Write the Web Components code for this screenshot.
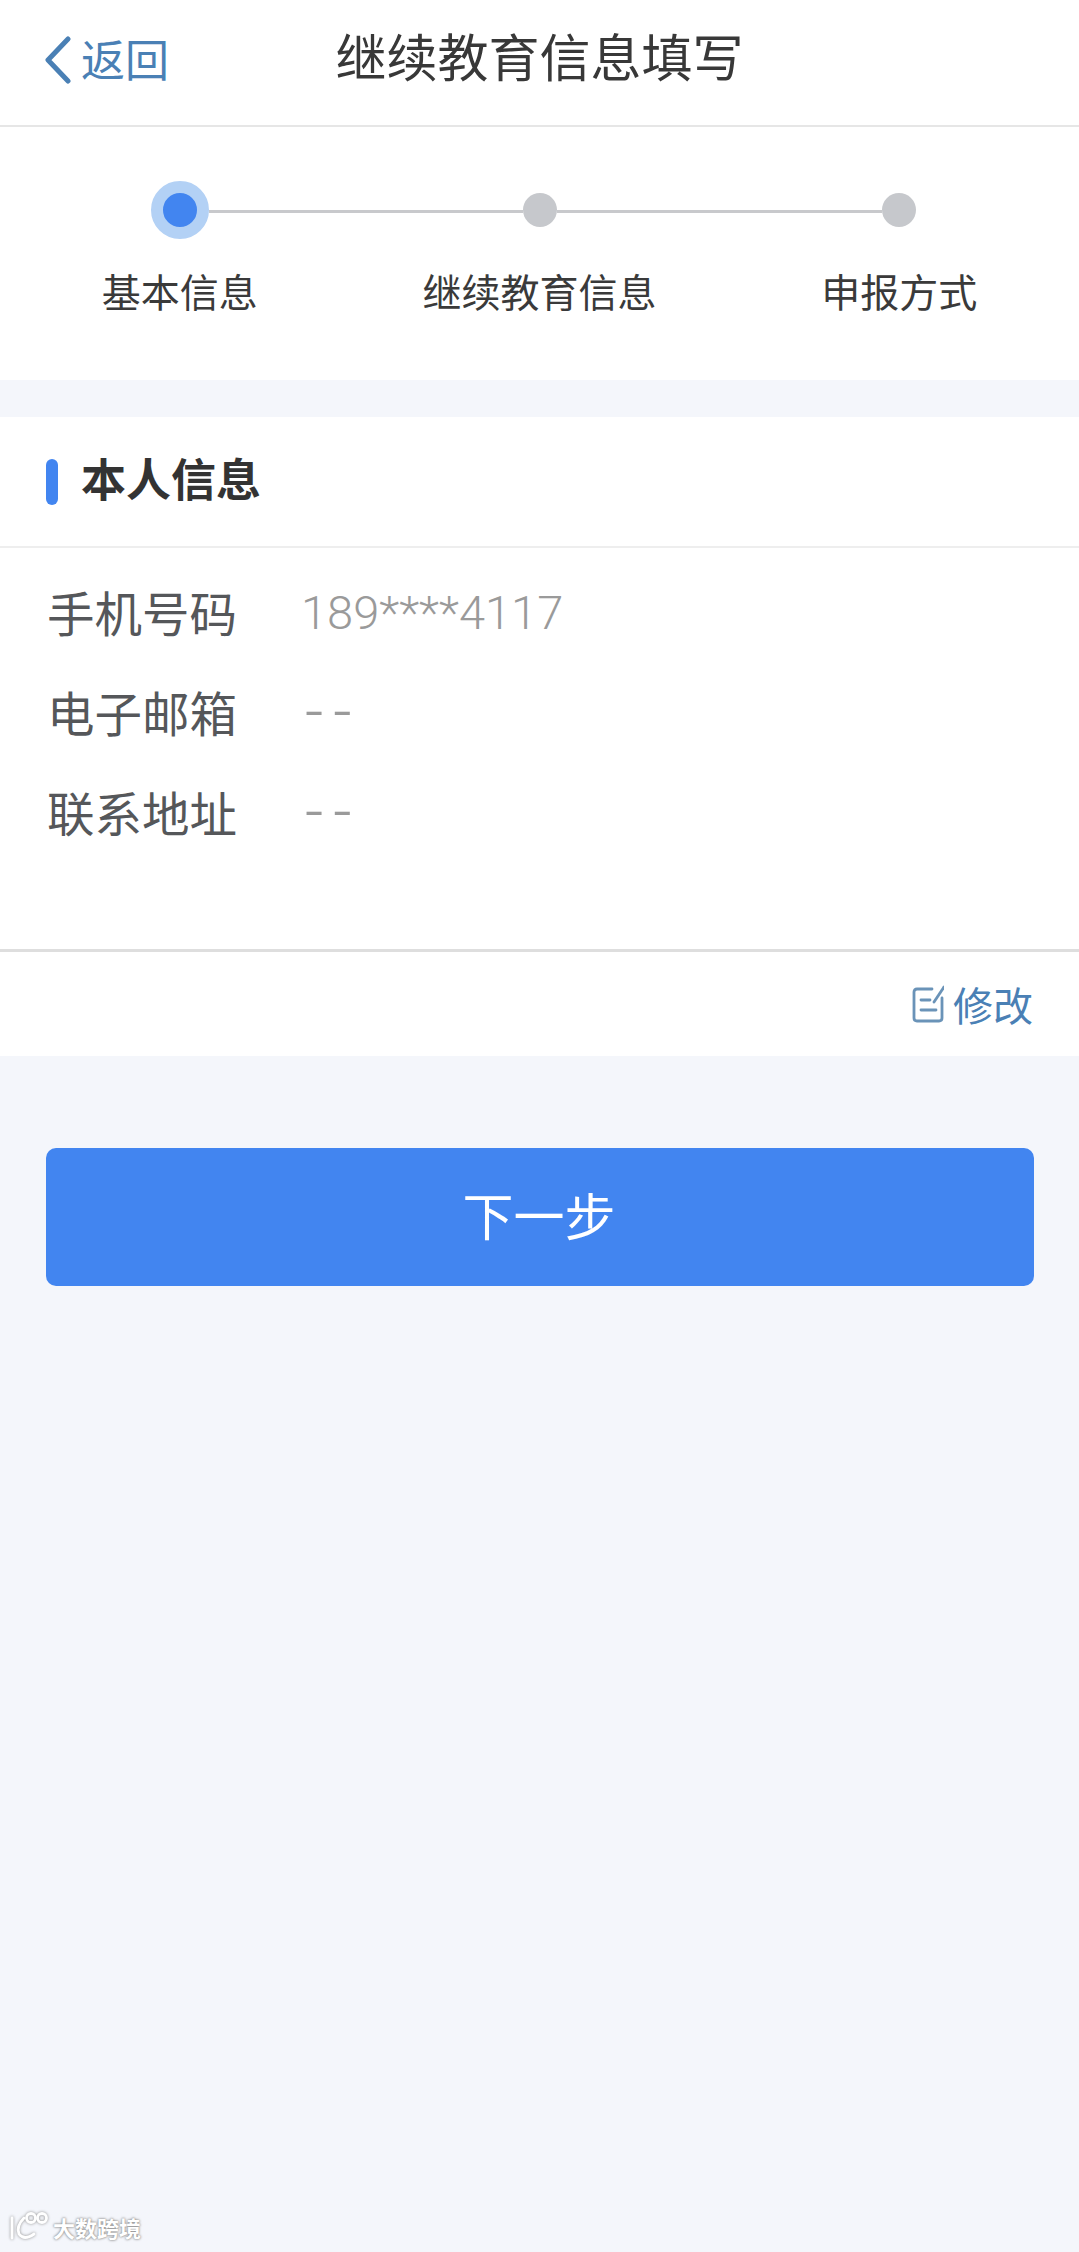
<!DOCTYPE html>
<html lang="zh">
<head>
<meta charset="utf-8">
<title>继续教育信息填写</title>
<style>
  html, body { margin: 0; padding: 0; }
  body {
    background: #f4f6fb;
    font-family: "Noto Sans CJK SC", "Noto Sans", sans-serif;
    color: #333;
  }
</style>
</head>
<body>
<form-page>
  <app-header back="返回">继续教育信息填写</app-header>
  <step-bar>
    <step-item active>基本信息</step-item>
    <step-item>继续教育信息</step-item>
    <step-item>申报方式</step-item>
  </step-bar>
  <info-card heading="本人信息" action="修改">
    <info-row label="手机号码">189****4117</info-row>
    <info-row label="电子邮箱">--</info-row>
    <info-row label="联系地址">--</info-row>
  </info-card>
  <primary-button>下一步</primary-button>
  <brand-mark>大数跨境</brand-mark>
</form-page>

<script>
class FormPage extends HTMLElement {
    constructor() {
        super();
        this.attachShadow({ mode: 'open' });
        this.shadowRoot.innerHTML = `
      <style>
        :host { display: block; position: relative; height: 2252px; overflow: hidden; }
      </style>
      <slot></slot>
    `;
    }
}

class AppHeader extends HTMLElement {
    constructor() {
        super();
        this.attachShadow({ mode: 'open' });
        this.shadowRoot.innerHTML = `
      <style>
        :host {
          display: grid;
          grid-template-columns: 1fr auto 1fr;
          align-items: center;
          height: 125px;
          background: #fff;
          border-bottom: 2px solid #e6e6e6;
        }
        .back {
          display: flex;
          align-items: center;
          gap: 9px;
          padding-left: 44px;
          padding-bottom: 8px;
          color: #4a80b5;
          font-size: 44px;
          line-height: 60px;
        }
        .back span { margin-bottom: 2px; }
        svg { width: 28px; height: 48px; margin-top: 2px; }
        .title { font-size: 51px; line-height: 70px; color: #383838; margin-bottom: 16px; }
      </style>
      <div class="back">
        <svg viewBox="0 0 28 48" fill="none" stroke="#4a80b5" stroke-width="5" stroke-linecap="round" stroke-linejoin="round">
          <path d="M24 3 L4 24 L24 45"/>
        </svg>
        <span id="back"></span>
      </div>
      <div class="title"><slot></slot></div>
      <div></div>
    `;
    }

    connectedCallback() {
        this.shadowRoot.querySelector('#back').textContent = this.getAttribute('back');
    }
}

class StepBar extends HTMLElement {
    constructor() {
        super();
        this.attachShadow({ mode: 'open' });
        this.shadowRoot.innerHTML = `
      <style>
        :host {
          display: grid;
          grid-template-columns: repeat(3, 1fr);
          padding: 54px 0 60px;
          background: #fff;
          margin-bottom: 37px;
        }
        ::slotted(step-item:first-child) { --left-line: transparent; }
        ::slotted(step-item:last-child) { --right-line: transparent; }
      </style>
      <slot></slot>
    `;
    }
}

class StepItem extends HTMLElement {
    constructor() {
        super();
        this.attachShadow({ mode: 'open' });
        this.shadowRoot.innerHTML = `
      <style>
        :host { display: block; }
        .track { display: flex; align-items: center; height: 58px; }
        .line { flex: 1; height: 3px; margin-top: 2px; }
        .left { background: var(--left-line, #c8c9cc); }
        .right { background: var(--right-line, #c8c9cc); }
        .dot { width: 34px; height: 34px; border-radius: 50%; background: #c6c8cc; }
        :host([active]) .dot {
          background: #4285f0;
          border: 12px solid #b3d1f5;
        }
        .label {
          margin-top: 24px;
          margin-bottom: 3px;
          text-align: center;
          font-size: 39px;
          line-height: 54px;
          color: #3a3a3a;
        }
      </style>
      <div class="track">
        <div class="line left"></div>
        <div class="dot"></div>
        <div class="line right"></div>
      </div>
      <div class="label"><slot></slot></div>
    `;
    }
}

class InfoCard extends HTMLElement {
    constructor() {
        super();
        this.attachShadow({ mode: 'open' });
        this.shadowRoot.innerHTML = `
      <style>
        :host { display: block; background: #fff; }
        .head {
          display: flex;
          align-items: center;
          gap: 23px;
          height: 129px;
          padding-left: 46px;
          border-bottom: 2px solid #eeeeee;
        }
        .bar { width: 12px; height: 46px; border-radius: 6px; background: #4285f0; }
        .heading { font-size: 45px; font-weight: 700; color: #333; line-height: 60px; margin-bottom: 7px; }
        .rows { padding: 15px 0 86px; border-bottom: 3px solid #dedede; }
        .foot {
          display: flex;
          justify-content: flex-end;
          align-items: center;
          gap: 9px;
          height: 104px;
          padding-right: 46px;
          color: #4a80b5;
          font-size: 40px;
        }
        svg { width: 32px; height: 38px; }
      </style>
      <div class="head">
        <div class="bar"></div>
        <div class="heading" id="heading"></div>
      </div>
      <div class="rows"><slot></slot></div>
      <div class="foot">
        <svg viewBox="0 0 32 38" fill="none" stroke="#6a93b8" stroke-width="2.8" stroke-linecap="round" stroke-linejoin="round">
          <path d="M20 4 H5 Q2 4 2 7 V33 Q2 36 5 36 H27 Q30 36 30 33 V13"/>
          <path d="M9 15 H18"/>
          <path d="M9 25 H24"/>
          <path d="M22 17 L32 2"/>
        </svg>
        <span id="action"></span>
      </div>
    `;
    }

    connectedCallback() {
        this.shadowRoot.querySelector('#heading').textContent = this.getAttribute('heading');
        this.shadowRoot.querySelector('#action').textContent = this.getAttribute('action');
    }
}

class InfoRow extends HTMLElement {
    constructor() {
        super();
        this.attachShadow({ mode: 'open' });
        this.shadowRoot.innerHTML = `
      <style>
        :host {
          display: flex;
          align-items: center;
          height: 100px;
          padding-left: 47px;
        }
        .label { width: 254px; font-size: 47.5px; color: #55575a; line-height: 64px; margin-bottom: 3px; white-space: nowrap; }
        .value {
          font-family: Roboto, "Noto Sans", sans-serif;
          font-weight: 300;
          font-size: 47px;
          color: #9a9a9a;
          line-height: 64px;
        }
      </style>
      <div class="label" id="label"></div>
      <div class="value"><slot></slot></div>
    `;
    }

    connectedCallback() {
        this.shadowRoot.querySelector('#label').textContent = this.getAttribute('label');
        // Empty values are written "--" with wide spacing
        if (this.textContent.trim() === '--') {
            const value = this.shadowRoot.querySelector('.value');
            value.style.letterSpacing = '10px';
            value.style.paddingLeft = '4px';
            value.style.paddingBottom = '1px';
            value.style.fontSize = '64px';
        }
    }
}

class PrimaryButton extends HTMLElement {
    constructor() {
        super();
        this.attachShadow({ mode: 'open' });
        this.shadowRoot.innerHTML = `
      <style>
        :host {
          display: flex;
          align-items: center;
          justify-content: center;
          height: 138px;
          margin: 92px 45px 0 46px;
          border-radius: 10px;
          background: #4285f0;
          color: #fff;
          font-size: 51px;
        }
        span { margin-bottom: 7px; margin-right: 2px; }
      </style>
      <span><slot></slot></span>
    `;
    }
}

class BrandMark extends HTMLElement {
    constructor() {
        super();
        this.attachShadow({ mode: 'open' });
        this.shadowRoot.innerHTML = `
      <style>
        :host {
          position: absolute;
          left: 9px;
          bottom: 8px;
          display: flex;
          align-items: center;
          gap: 2px;
          color: #fff;
          font-size: 22px;
          font-weight: 700;
          line-height: 28px;
          text-shadow: 0 0 3px #8d8d8d, 0 0 2px #9a9a9a;
        }
        svg { width: 42px; height: 34px; filter: drop-shadow(0 0 1.5px #8d8d8d); }
      </style>
      <svg viewBox="0 0 42 34" fill="none" stroke="#fff" stroke-width="2.8" stroke-linecap="round">
        <path d="M3 8 V28"/>
        <path d="M15 8 Q7 16 10 24 Q15 31 25 24"/>
        <circle cx="22" cy="8" r="4.5"/>
        <circle cx="33" cy="8" r="4.5"/>
      </svg>
      <span><slot></slot></span>
    `;
    }
}

// Define the custom elements
customElements.define('form-page', FormPage);
customElements.define('app-header', AppHeader);
customElements.define('step-bar', StepBar);
customElements.define('step-item', StepItem);
customElements.define('info-card', InfoCard);
customElements.define('info-row', InfoRow);
customElements.define('primary-button', PrimaryButton);
customElements.define('brand-mark', BrandMark);
</script>
</body>
</html>
